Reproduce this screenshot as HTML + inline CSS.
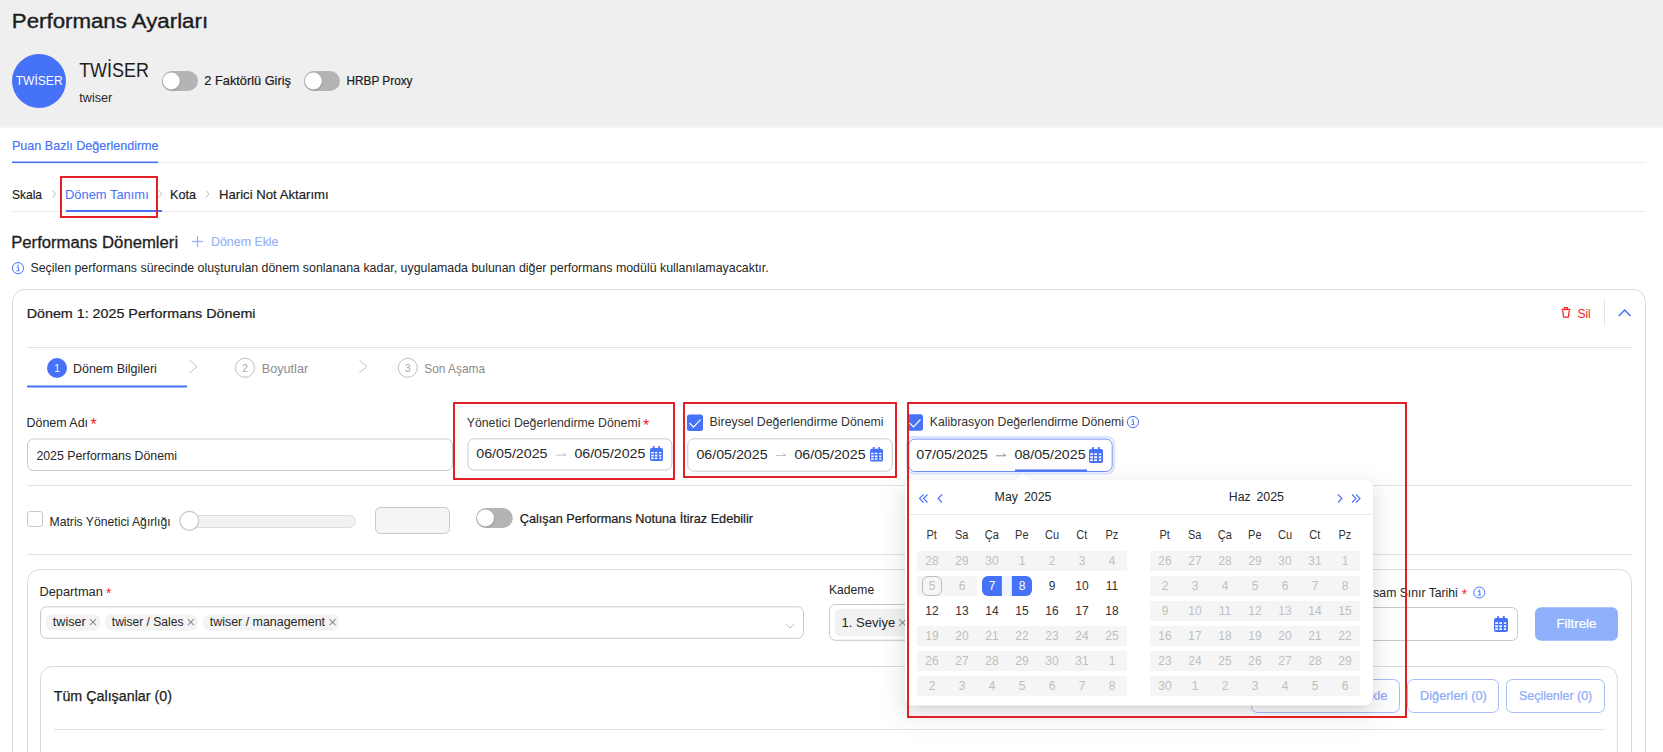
<!DOCTYPE html>
<html><head><meta charset="utf-8"><title>Performans Ayarları</title>
<style>html,body{margin:0;padding:0;background:#fff;overflow:hidden;width:1663px;height:752px;}
svg{position:absolute;left:0;top:0;display:block}
text{font-family:"Liberation Sans", sans-serif;}
</style></head><body>
<svg width="1663" height="752" viewBox="0 0 1663 752" font-family='"Liberation Sans", sans-serif'>
<defs><filter id="blur1" x="-50%" y="-50%" width="200%" height="200%"><feGaussianBlur stdDeviation="1"/></filter><filter id="shadow" x="-10%" y="-10%" width="120%" height="125%"><feGaussianBlur stdDeviation="7"/></filter></defs>
<rect x="0" y="0" width="1663" height="752" rx="0" fill="#ffffff" />
<rect x="0" y="0" width="1663" height="127.6" rx="0" fill="#efefef" />
<text x="11.82" y="28" font-size="20" fill="#1d1d1d" stroke="#1d1d1d" stroke-width="0.36" textLength="196.27" lengthAdjust="spacingAndGlyphs">Performans Ayarları</text>
<circle cx="39" cy="81" r="27" fill="#4672f8"/>
<text x="15.76" y="85" font-size="13" fill="#ffffff" textLength="46.83" lengthAdjust="spacingAndGlyphs">TWİSER</text>
<text x="79.14" y="77" font-size="20" fill="#1d1d1d" textLength="69.73" lengthAdjust="spacingAndGlyphs">TWİSER</text>
<text x="79.31" y="102" font-size="12" fill="#262626" textLength="32.90" lengthAdjust="spacingAndGlyphs">twiser</text>
<rect x="162" y="71" width="36" height="20" rx="10.0" fill="#b4b4b4" />
<circle cx="171.3" cy="81.8" r="8.5" fill="#000" opacity="0.22" filter="url(#blur1)"/>
<circle cx="171.3" cy="81.0" r="8.5" fill="#fff"/>
<text x="204.36" y="85" font-size="13" fill="#1d1d1d" stroke="#1d1d1d" stroke-width="0.23" textLength="86.58" lengthAdjust="spacingAndGlyphs">2 Faktörlü Giriş</text>
<rect x="304" y="71" width="36" height="20" rx="10.0" fill="#b4b4b4" />
<circle cx="313.3" cy="81.8" r="8.5" fill="#000" opacity="0.22" filter="url(#blur1)"/>
<circle cx="313.3" cy="81.0" r="8.5" fill="#fff"/>
<text x="346.56" y="85" font-size="13" fill="#1d1d1d" stroke="#1d1d1d" stroke-width="0.23" textLength="65.94" lengthAdjust="spacingAndGlyphs">HRBP Proxy</text>
<line x1="12" y1="162.5" x2="1646" y2="162.5" stroke="#ececec" stroke-width="1"/>
<text x="12.00" y="150" font-size="13" fill="#4672f8" stroke="#4672f8" stroke-width="0.18" textLength="146.55" lengthAdjust="spacingAndGlyphs">Puan Bazlı Değerlendirme</text>
<rect x="12" y="161.5" width="146" height="1.6" rx="0" fill="#4672f8" />
<line x1="12" y1="211.5" x2="1646" y2="211.5" stroke="#ececec" stroke-width="1"/>
<text x="11.96" y="199" font-size="13" fill="#1d1d1d" stroke="#1d1d1d" stroke-width="0.18" textLength="30.06" lengthAdjust="spacingAndGlyphs">Skala</text>
<polyline points="52.5,190.5 55.5,194.0 52.5,197.5" fill="none" stroke="#bfbfbf" stroke-width="1"/>
<text x="64.97" y="199" font-size="13" fill="#4672f8" textLength="83.75" lengthAdjust="spacingAndGlyphs">Dönem Tanımı</text>
<rect x="66" y="210" width="96" height="2" rx="0" fill="#4672f8" />
<polyline points="159,190.5 162,194.0 159,197.5" fill="none" stroke="#bfbfbf" stroke-width="1"/>
<text x="169.99" y="199" font-size="13" fill="#1d1d1d" stroke="#1d1d1d" stroke-width="0.18" textLength="26.04" lengthAdjust="spacingAndGlyphs">Kota</text>
<polyline points="206,190.5 209,194.0 206,197.5" fill="none" stroke="#bfbfbf" stroke-width="1"/>
<text x="218.95" y="199" font-size="13" fill="#1d1d1d" stroke="#1d1d1d" stroke-width="0.18" textLength="109.81" lengthAdjust="spacingAndGlyphs">Harici Not Aktarımı</text>
<text x="11.16" y="248" font-size="16" fill="#1d1d1d" stroke="#1d1d1d" stroke-width="0.29" textLength="166.98" lengthAdjust="spacingAndGlyphs">Performans Dönemleri</text>
<g stroke="#98b2f9" stroke-width="1.3"><line x1="192" y1="241.5" x2="203" y2="241.5"/><line x1="197.5" y1="236" x2="197.5" y2="247"/></g>
<text x="211.01" y="246" font-size="13" fill="#98b2f9" stroke="#98b2f9" stroke-width="0.18" textLength="67.51" lengthAdjust="spacingAndGlyphs">Dönem Ekle</text>
<circle cx="18" cy="268.2" r="5.6" fill="none" stroke="#4672f8" stroke-width="1"/>
<circle cx="18" cy="265.59999999999997" r="0.75" fill="#4672f8"/>
<path d="M16.7 267.3 H18.55 V270.59999999999997 M16.5 270.8 H19.5" fill="none" stroke="#4672f8" stroke-width="1"/>
<text x="30.44" y="272" font-size="12.8" fill="#262626" textLength="738.21" lengthAdjust="spacingAndGlyphs">Seçilen performans sürecinde oluşturulan dönem sonlanana kadar, uygulamada bulunan diğer performans modülü kullanılamayacaktır.</text>
<rect x="12.5" y="289.5" width="1633" height="600" rx="12" fill="#fff" stroke="#d9d9d9" stroke-width="1" />
<text x="26.66" y="317.8" font-size="12.7" fill="#1d1d1d" stroke="#1d1d1d" stroke-width="0.23" textLength="228.82" lengthAdjust="spacingAndGlyphs">Dönem 1: 2025 Performans Dönemi</text>
<g fill="none" stroke="#f5222d" stroke-width="1.3"><path d="M1561.5 309.5 H1570.5"/><path d="M1564.5 309.2 V307.6 H1567.5 V309.2"/><path d="M1562.7 310.5 L1563.6 317.2 H1568.4 L1569.3 310.5"/></g>
<text x="1577.46" y="317.5" font-size="12" fill="#f5222d" textLength="13.34" lengthAdjust="spacingAndGlyphs">Sil</text>
<line x1="1604.5" y1="299.5" x2="1604.5" y2="325.5" stroke="#e3e3e3" stroke-width="1"/>
<polyline points="1618.8,316 1624.7,310 1630.6,316" fill="none" stroke="#4672f8" stroke-width="1.5"/>
<line x1="27" y1="347.5" x2="1632" y2="347.5" stroke="#e3e3e3" stroke-width="1"/>
<circle cx="57" cy="368" r="10" fill="#4672f8"/>
<text x="57" y="372" font-size="10" fill="#fff" text-anchor="middle">1</text>
<text x="73.00" y="372.5" font-size="13" fill="#262626" textLength="83.81" lengthAdjust="spacingAndGlyphs">Dönem Bilgileri</text>
<polyline points="189.5,360 197.0,366.5 189.5,373" fill="none" stroke="#bfbfbf" stroke-width="1"/>
<rect x="27" y="385.5" width="160" height="2" rx="0" fill="#4672f8" />
<circle cx="245" cy="367.8" r="9.5" fill="none" stroke="#bfbfbf" stroke-width="1"/>
<text x="245" y="371.5" font-size="10" fill="#a6a6a6" text-anchor="middle">2</text>
<text x="261.68" y="372.5" font-size="13" fill="#8c8c8c" textLength="46.55" lengthAdjust="spacingAndGlyphs">Boyutlar</text>
<polyline points="359.3,360 366.8,366.5 359.3,373" fill="none" stroke="#bfbfbf" stroke-width="1"/>
<circle cx="407.8" cy="367.8" r="9.5" fill="none" stroke="#bfbfbf" stroke-width="1"/>
<text x="407.8" y="371.5" font-size="10" fill="#a6a6a6" text-anchor="middle">3</text>
<text x="424.27" y="372.5" font-size="13" fill="#8c8c8c" textLength="60.73" lengthAdjust="spacingAndGlyphs">Son Aşama</text>
<text x="26.50" y="427" font-size="13" fill="#262626" textLength="61.54" lengthAdjust="spacingAndGlyphs">Dönem Adı</text>
<text x="90.41" y="429.76911764705886" font-size="16.91176470588235" fill="#f5222d" textLength="6.22" lengthAdjust="spacingAndGlyphs">*</text>
<rect x="27.5" y="439" width="425" height="31.5" rx="6" fill="#fff" stroke="#c9c9c9" stroke-width="1" />
<text x="36.38" y="459.5" font-size="13" fill="#262626" textLength="140.67" lengthAdjust="spacingAndGlyphs">2025 Performans Dönemi</text>
<text x="466.69" y="427" font-size="13" fill="#333333" textLength="173.75" lengthAdjust="spacingAndGlyphs">Yönetici Değerlendirme Dönemi</text>
<text x="642.96" y="430.77058823529404" font-size="17.05882352941163" fill="#f5222d" textLength="6.27" lengthAdjust="spacingAndGlyphs">*</text>
<rect x="467.9" y="438.8" width="204" height="31.200000000000003" rx="6" fill="#fff" stroke="#c9c9c9" stroke-width="1" />
<text x="476.23" y="457.8" font-size="13" fill="#262626" textLength="71.34" lengthAdjust="spacingAndGlyphs">06/05/2025</text>
<path d="M556.5 455.2 H566 M563 453.2 L566 455.2" fill="none" stroke="#bfbfbf" stroke-width="1"/>
<text x="574.43" y="457.8" font-size="13" fill="#262626" textLength="70.93" lengthAdjust="spacingAndGlyphs">06/05/2025</text>
<g fill="#4672f8">
<rect x="650" y="447.88" width="13" height="13.12" rx="1.86"/>
<rect x="652.88" y="446" width="1.76" height="3.75" rx="0.6"/>
<rect x="658.26" y="446" width="1.76" height="3.75" rx="0.6"/>
</g>
<rect x="651.11" y="451.91" width="2.60" height="1.50" fill="#fff"/>
<rect x="651.11" y="454.72" width="2.60" height="1.78" fill="#fff"/>
<rect x="651.11" y="457.53" width="2.60" height="1.59" fill="#fff"/>
<rect x="654.83" y="451.91" width="2.60" height="1.50" fill="#fff"/>
<rect x="654.83" y="454.72" width="2.60" height="1.78" fill="#fff"/>
<rect x="654.83" y="457.53" width="2.60" height="1.59" fill="#fff"/>
<rect x="659.19" y="451.91" width="2.14" height="1.50" fill="#fff"/>
<rect x="659.19" y="454.72" width="2.14" height="1.78" fill="#fff"/>
<rect x="659.19" y="457.53" width="2.14" height="1.59" fill="#fff"/>
<rect x="687" y="414.5" width="16" height="16.5" rx="2.5" fill="#4672f8" />
<polyline points="689.5,423.0 693.5,427.1 700.5,419.7" fill="none" stroke="#fff" stroke-width="1.15"/>
<text x="709.61" y="426" font-size="13" fill="#333333" textLength="173.91" lengthAdjust="spacingAndGlyphs">Bireysel Değerlendirme Dönemi</text>
<rect x="687.8" y="438.8" width="204.5" height="32.4" rx="6" fill="#fff" stroke="#c9c9c9" stroke-width="1" />
<text x="696.43" y="458.7" font-size="13" fill="#262626" textLength="71.14" lengthAdjust="spacingAndGlyphs">06/05/2025</text>
<path d="M776 455.5 H786 M783 453.5 L786 455.5" fill="none" stroke="#bfbfbf" stroke-width="1"/>
<text x="794.43" y="458.7" font-size="13" fill="#262626" textLength="71.14" lengthAdjust="spacingAndGlyphs">06/05/2025</text>
<g fill="#4672f8">
<rect x="870" y="448.82" width="13" height="12.78" rx="1.86"/>
<rect x="872.88" y="447" width="1.76" height="3.65" rx="0.6"/>
<rect x="878.26" y="447" width="1.76" height="3.65" rx="0.6"/>
</g>
<rect x="871.11" y="452.75" width="2.60" height="1.46" fill="#fff"/>
<rect x="871.11" y="455.49" width="2.60" height="1.73" fill="#fff"/>
<rect x="871.11" y="458.22" width="2.60" height="1.55" fill="#fff"/>
<rect x="874.83" y="452.75" width="2.60" height="1.46" fill="#fff"/>
<rect x="874.83" y="455.49" width="2.60" height="1.73" fill="#fff"/>
<rect x="874.83" y="458.22" width="2.60" height="1.55" fill="#fff"/>
<rect x="879.19" y="452.75" width="2.14" height="1.46" fill="#fff"/>
<rect x="879.19" y="455.49" width="2.14" height="1.73" fill="#fff"/>
<rect x="879.19" y="458.22" width="2.14" height="1.55" fill="#fff"/>
<rect x="907" y="414.3" width="16" height="16.5" rx="2.5" fill="#4672f8" />
<polyline points="909.5,422.8 913.5,426.90000000000003 920.5,419.5" fill="none" stroke="#fff" stroke-width="1.15"/>
<text x="929.82" y="426" font-size="13" fill="#333333" textLength="194.19" lengthAdjust="spacingAndGlyphs">Kalibrasyon Değerlendirme Dönemi</text>
<circle cx="1132.9" cy="422" r="5.6" fill="none" stroke="#4672f8" stroke-width="1"/>
<circle cx="1132.9" cy="419.4" r="0.75" fill="#4672f8"/>
<path d="M1131.6000000000001 421.1 H1133.45 V424.4 M1131.4 424.6 H1134.4" fill="none" stroke="#4672f8" stroke-width="1"/>
<rect x="906.8" y="437.1" width="207.4" height="36.4" rx="7" fill="none" stroke="#dbe5fd" stroke-width="2" />
<rect x="908.8" y="439.1" width="203.4" height="32.4" rx="6" fill="#fff" stroke="#6d8ff7" stroke-width="1" />
<text x="916.23" y="458.9" font-size="13" fill="#262626" textLength="71.54" lengthAdjust="spacingAndGlyphs">07/05/2025</text>
<path d="M996 455.8 H1006 M1003 453.8 L1006 455.8" fill="none" stroke="#8c8c8c" stroke-width="1"/>
<text x="1014.43" y="458.9" font-size="13" fill="#262626" textLength="71.14" lengthAdjust="spacingAndGlyphs">08/05/2025</text>
<g fill="#4672f8">
<rect x="1089" y="449.00" width="14" height="14.00" rx="2.00"/>
<rect x="1092.10" y="447" width="1.90" height="4.00" rx="0.6"/>
<rect x="1097.90" y="447" width="1.90" height="4.00" rx="0.6"/>
</g>
<rect x="1090.20" y="453.30" width="2.80" height="1.60" fill="#fff"/>
<rect x="1090.20" y="456.30" width="2.80" height="1.90" fill="#fff"/>
<rect x="1090.20" y="459.30" width="2.80" height="1.70" fill="#fff"/>
<rect x="1094.20" y="453.30" width="2.80" height="1.60" fill="#fff"/>
<rect x="1094.20" y="456.30" width="2.80" height="1.90" fill="#fff"/>
<rect x="1094.20" y="459.30" width="2.80" height="1.70" fill="#fff"/>
<rect x="1098.90" y="453.30" width="2.30" height="1.60" fill="#fff"/>
<rect x="1098.90" y="456.30" width="2.30" height="1.90" fill="#fff"/>
<rect x="1098.90" y="459.30" width="2.30" height="1.70" fill="#fff"/>
<rect x="1015" y="469.5" width="72" height="2" rx="0" fill="#4672f8" />
<line x1="27" y1="485.5" x2="1632" y2="485.5" stroke="#e3e3e3" stroke-width="1"/>
<rect x="27.5" y="511.5" width="15" height="15" rx="2.5" fill="#fff" stroke="#c9c9c9" stroke-width="1" />
<text x="49.52" y="525.5" font-size="13" fill="#262626" textLength="121.08" lengthAdjust="spacingAndGlyphs">Matris Yönetici Ağırlığı</text>
<rect x="180.5" y="515.5" width="175" height="12" rx="6" fill="#f2f2f2" stroke="#dcdcdc" stroke-width="1" />
<circle cx="189.3" cy="520.8" r="9.5" fill="#fff" stroke="#c9c9c9" stroke-width="1.2"/>
<rect x="375.5" y="507.5" width="74" height="26" rx="5" fill="#f5f5f5" stroke="#c9c9c9" stroke-width="1" />
<rect x="476.2" y="508" width="36.6" height="20" rx="10.0" fill="#b4b4b4" />
<circle cx="485.5" cy="518.8" r="8.5" fill="#000" opacity="0.22" filter="url(#blur1)"/>
<circle cx="485.5" cy="518.0" r="8.5" fill="#fff"/>
<text x="519.77" y="523.3" font-size="13" fill="#1d1d1d" stroke="#1d1d1d" stroke-width="0.23" textLength="233.16" lengthAdjust="spacingAndGlyphs">Çalışan Performans Notuna İtiraz Edebilir</text>
<line x1="27" y1="554.5" x2="1632" y2="554.5" stroke="#e3e3e3" stroke-width="1"/>
<rect x="27.5" y="569.5" width="1604" height="400" rx="12" fill="#fff" stroke="#d9d9d9" stroke-width="1" />
<text x="39.48" y="596" font-size="12.5" fill="#262626" textLength="63.38" lengthAdjust="spacingAndGlyphs">Departman</text>
<text x="106.04" y="598.1470588235294" font-size="14.705882352941176" fill="#f5222d" textLength="5.40" lengthAdjust="spacingAndGlyphs">*</text>
<rect x="40.5" y="606.8" width="763" height="31.5" rx="6" fill="#fff" stroke="#c9c9c9" stroke-width="1" />
<rect x="46" y="614.3" width="54.5" height="16.5" rx="7" fill="#f3f3f3" />
<text x="52.81" y="626" font-size="12" fill="#262626" textLength="32.90" lengthAdjust="spacingAndGlyphs">twiser</text>
<path d="M89.9 619.1 L95.9 625.1 M95.9 619.1 L89.9 625.1" stroke="#8c8c8c" stroke-width="1.05" fill="none"/>
<rect x="105" y="614.3" width="92.5" height="16.5" rx="7" fill="#f3f3f3" />
<text x="111.82" y="626" font-size="12" fill="#262626" textLength="71.62" lengthAdjust="spacingAndGlyphs">twiser / Sales</text>
<path d="M187.8 619.1 L193.8 625.1 M193.8 619.1 L187.8 625.1" stroke="#8c8c8c" stroke-width="1.05" fill="none"/>
<rect x="203" y="614.3" width="136" height="16.5" rx="7" fill="#f3f3f3" />
<text x="209.81" y="626" font-size="12" fill="#262626" textLength="115.27" lengthAdjust="spacingAndGlyphs">twiser / management</text>
<path d="M329.6 619.1 L335.6 625.1 M335.6 619.1 L329.6 625.1" stroke="#8c8c8c" stroke-width="1.05" fill="none"/>
<polyline points="785.4,623.6 790,628 794.5,623.6" fill="none" stroke="#bfbfbf" stroke-width="1"/>
<text x="829.03" y="594.1" font-size="13" fill="#262626" textLength="45.15" lengthAdjust="spacingAndGlyphs">Kademe</text>
<rect x="829.5" y="604.5" width="300" height="35.8" rx="6" fill="#fff" stroke="#c9c9c9" stroke-width="1" />
<rect x="834.8" y="609" width="200" height="27" rx="5" fill="#f2f2f2" />
<text x="841.62" y="626.8" font-size="13" fill="#262626" textLength="53.54" lengthAdjust="spacingAndGlyphs">1. Seviye</text>
<path d="M899.2 619.3000000000001 L905.8 625.9 M905.8 619.3000000000001 L899.2 625.9" stroke="#8c8c8c" stroke-width="1.05" fill="none"/>
<text x="1351.52" y="597" font-size="13" fill="#262626" textLength="106.30" lengthAdjust="spacingAndGlyphs">Kapsam Sınır Tarihi</text>
<text x="1461.79" y="598.6470588235294" font-size="14.705882352941176" fill="#f5222d" textLength="5.40" lengthAdjust="spacingAndGlyphs">*</text>
<circle cx="1479.3" cy="592.5" r="5.5" fill="none" stroke="#4672f8" stroke-width="1"/>
<circle cx="1479.3" cy="589.9" r="0.75" fill="#4672f8"/>
<path d="M1478.0 591.6 H1479.85 V594.9 M1477.8 595.1 H1480.8" fill="none" stroke="#4672f8" stroke-width="1"/>
<rect x="1300.5" y="607.5" width="217" height="33" rx="6" fill="#fff" stroke="#c9c9c9" stroke-width="1" />
<g fill="#4672f8">
<rect x="1494" y="618.00" width="14" height="14.00" rx="2.00"/>
<rect x="1497.10" y="616" width="1.90" height="4.00" rx="0.6"/>
<rect x="1502.90" y="616" width="1.90" height="4.00" rx="0.6"/>
</g>
<rect x="1495.20" y="622.30" width="2.80" height="1.60" fill="#fff"/>
<rect x="1495.20" y="625.30" width="2.80" height="1.90" fill="#fff"/>
<rect x="1495.20" y="628.30" width="2.80" height="1.70" fill="#fff"/>
<rect x="1499.20" y="622.30" width="2.80" height="1.60" fill="#fff"/>
<rect x="1499.20" y="625.30" width="2.80" height="1.90" fill="#fff"/>
<rect x="1499.20" y="628.30" width="2.80" height="1.70" fill="#fff"/>
<rect x="1503.90" y="622.30" width="2.30" height="1.60" fill="#fff"/>
<rect x="1503.90" y="625.30" width="2.30" height="1.90" fill="#fff"/>
<rect x="1503.90" y="628.30" width="2.30" height="1.70" fill="#fff"/>
<rect x="1535" y="607.2" width="83" height="33.5" rx="6" fill="#8fb1fb" />
<text x="1556.43" y="627.9" font-size="13" fill="#ffffff" stroke="#ffffff" stroke-width="0.23" textLength="40.11" lengthAdjust="spacingAndGlyphs">Filtrele</text>
<rect x="40.5" y="666.5" width="1576.8" height="300" rx="12" fill="#fff" stroke="#d9d9d9" stroke-width="1" />
<text x="53.71" y="701" font-size="14" fill="#1d1d1d" stroke="#1d1d1d" stroke-width="0.25" textLength="118.21" lengthAdjust="spacingAndGlyphs">Tüm Çalışanlar (0)</text>
<rect x="1251.5" y="679.5" width="148" height="33" rx="6" fill="#fff" stroke="#a6bdfa" stroke-width="1" />
<text x="1309.74" y="700" font-size="13" fill="#8eaaf8" stroke="#8eaaf8" stroke-width="0.23" textLength="77.82" lengthAdjust="spacingAndGlyphs">Tümünü Ekle</text>
<rect x="1407.5" y="679.5" width="91" height="33" rx="6" fill="#fff" stroke="#a6bdfa" stroke-width="1" />
<text x="1419.98" y="700" font-size="13" fill="#8eaaf8" stroke="#8eaaf8" stroke-width="0.23" textLength="66.84" lengthAdjust="spacingAndGlyphs">Diğerleri (0)</text>
<rect x="1506.5" y="679.5" width="98" height="33" rx="6" fill="#fff" stroke="#a6bdfa" stroke-width="1" />
<text x="1518.94" y="700" font-size="13" fill="#8eaaf8" stroke="#8eaaf8" stroke-width="0.23" textLength="73.32" lengthAdjust="spacingAndGlyphs">Seçilenler (0)</text>
<line x1="54" y1="729.5" x2="1604.8" y2="729.5" stroke="#e3e3e3" stroke-width="1"/>
<filter id="sh1" filterUnits="userSpaceOnUse" x="825" y="400" width="628" height="385.5"><feGaussianBlur stdDeviation="8.0"/></filter>
<rect x="905" y="486" width="468" height="225.5" rx="8" fill="#000" opacity="0.08" filter="url(#sh1)"/>
<filter id="sh2" filterUnits="userSpaceOnUse" x="825" y="400" width="628" height="385.5"><feGaussianBlur stdDeviation="3.0"/></filter>
<rect x="909" y="487" width="460" height="217.5" rx="8" fill="#000" opacity="0.12" filter="url(#sh2)"/>
<filter id="sh3" filterUnits="userSpaceOnUse" x="825" y="400" width="628" height="385.5"><feGaussianBlur stdDeviation="14.0"/></filter>
<rect x="897" y="481" width="484" height="241.5" rx="16" fill="#000" opacity="0.05" filter="url(#sh3)"/>
<rect x="905" y="480" width="468" height="225.5" rx="8" fill="#fff" />
<path d="M1016 480 L1023 473.5 L1030 480 Z" fill="#fff"/>
<g fill="none" stroke="#4672f8" stroke-width="1.1"><polyline points="923.5,494.5 919.5,498.5 923.5,502.5"/><polyline points="927.5,494.5 923.5,498.5 927.5,502.5"/><polyline points="942,494.5 938,498.5 942,502.5"/><polyline points="1338,494.5 1342,498.5 1338,502.5"/><polyline points="1352,494.5 1356,498.5 1352,502.5"/><polyline points="1356,494.5 1360,498.5 1356,502.5"/></g>
<text x="994.61" y="501" font-size="12.3" fill="#262626" textLength="23.38" lengthAdjust="spacingAndGlyphs">May</text>
<text x="1023.88" y="501" font-size="12.3" fill="#262626" textLength="27.61" lengthAdjust="spacingAndGlyphs">2025</text>
<text x="1228.82" y="501" font-size="12.3" fill="#262626" textLength="21.77" lengthAdjust="spacingAndGlyphs">Haz</text>
<text x="1256.38" y="501" font-size="12.3" fill="#262626" textLength="27.61" lengthAdjust="spacingAndGlyphs">2025</text>
<line x1="909" y1="514.5" x2="1373" y2="514.5" stroke="#ebebeb" stroke-width="1"/>
<text x="926.42" y="539" font-size="12.5" fill="#333333" textLength="10.39" lengthAdjust="spacingAndGlyphs">Pt</text>
<text x="955.04" y="539" font-size="12.5" fill="#333333" textLength="13.46" lengthAdjust="spacingAndGlyphs">Sa</text>
<text x="984.71" y="539" font-size="12.5" fill="#333333" textLength="14.06" lengthAdjust="spacingAndGlyphs">Ça</text>
<text x="1015.07" y="539" font-size="12.5" fill="#333333" textLength="13.46" lengthAdjust="spacingAndGlyphs">Pe</text>
<text x="1045.07" y="539" font-size="12.5" fill="#333333" textLength="14.06" lengthAdjust="spacingAndGlyphs">Cu</text>
<text x="1076.28" y="539" font-size="12.5" fill="#333333" textLength="11.00" lengthAdjust="spacingAndGlyphs">Ct</text>
<text x="1105.43" y="539" font-size="12.5" fill="#333333" textLength="12.84" lengthAdjust="spacingAndGlyphs">Pz</text>
<rect x="917" y="551" width="210" height="20" rx="0" fill="#f5f5f5" />
<rect x="917" y="576" width="60" height="20" rx="0" fill="#f5f5f5" />
<rect x="917" y="626" width="210" height="20" rx="0" fill="#f5f5f5" />
<rect x="917" y="651" width="210" height="20" rx="0" fill="#f5f5f5" />
<rect x="917" y="676" width="210" height="20" rx="0" fill="#f5f5f5" />
<rect x="1001.7" y="576" width="10.5" height="20" rx="0" fill="#eef3fe" />
<path d="M988 576 H1001.9 V596 H988 A6 6 0 0 1 982 590 V582 A6 6 0 0 1 988 576 Z" fill="#4672f8"/>
<path d="M1011.9 576 H1026 A6 6 0 0 1 1032 582 V590 A6 6 0 0 1 1026 596 H1011.9 Z" fill="#4672f8"/>
<rect x="922.5" y="576.5" width="19" height="19" rx="5.5" fill="none" stroke="#bdbdbd" stroke-width="1" />
<text x="932" y="565.2" font-size="12" fill="#bfbfbf" text-anchor="middle">28</text>
<text x="962" y="565.2" font-size="12" fill="#bfbfbf" text-anchor="middle">29</text>
<text x="992" y="565.2" font-size="12" fill="#bfbfbf" text-anchor="middle">30</text>
<text x="1022" y="565.2" font-size="12" fill="#bfbfbf" text-anchor="middle">1</text>
<text x="1052" y="565.2" font-size="12" fill="#bfbfbf" text-anchor="middle">2</text>
<text x="1082" y="565.2" font-size="12" fill="#bfbfbf" text-anchor="middle">3</text>
<text x="1112" y="565.2" font-size="12" fill="#bfbfbf" text-anchor="middle">4</text>
<text x="932" y="590.2" font-size="12" fill="#bfbfbf" text-anchor="middle">5</text>
<text x="962" y="590.2" font-size="12" fill="#bfbfbf" text-anchor="middle">6</text>
<text x="992" y="590.2" font-size="12" fill="#ffffff" text-anchor="middle">7</text>
<text x="1022" y="590.2" font-size="12" fill="#ffffff" text-anchor="middle">8</text>
<text x="1052" y="590.2" font-size="12" fill="#333333" text-anchor="middle">9</text>
<text x="1082" y="590.2" font-size="12" fill="#333333" text-anchor="middle">10</text>
<text x="1112" y="590.2" font-size="12" fill="#333333" text-anchor="middle">11</text>
<text x="932" y="615.2" font-size="12" fill="#333333" text-anchor="middle">12</text>
<text x="962" y="615.2" font-size="12" fill="#333333" text-anchor="middle">13</text>
<text x="992" y="615.2" font-size="12" fill="#333333" text-anchor="middle">14</text>
<text x="1022" y="615.2" font-size="12" fill="#333333" text-anchor="middle">15</text>
<text x="1052" y="615.2" font-size="12" fill="#333333" text-anchor="middle">16</text>
<text x="1082" y="615.2" font-size="12" fill="#333333" text-anchor="middle">17</text>
<text x="1112" y="615.2" font-size="12" fill="#333333" text-anchor="middle">18</text>
<text x="932" y="640.2" font-size="12" fill="#bfbfbf" text-anchor="middle">19</text>
<text x="962" y="640.2" font-size="12" fill="#bfbfbf" text-anchor="middle">20</text>
<text x="992" y="640.2" font-size="12" fill="#bfbfbf" text-anchor="middle">21</text>
<text x="1022" y="640.2" font-size="12" fill="#bfbfbf" text-anchor="middle">22</text>
<text x="1052" y="640.2" font-size="12" fill="#bfbfbf" text-anchor="middle">23</text>
<text x="1082" y="640.2" font-size="12" fill="#bfbfbf" text-anchor="middle">24</text>
<text x="1112" y="640.2" font-size="12" fill="#bfbfbf" text-anchor="middle">25</text>
<text x="932" y="665.2" font-size="12" fill="#bfbfbf" text-anchor="middle">26</text>
<text x="962" y="665.2" font-size="12" fill="#bfbfbf" text-anchor="middle">27</text>
<text x="992" y="665.2" font-size="12" fill="#bfbfbf" text-anchor="middle">28</text>
<text x="1022" y="665.2" font-size="12" fill="#bfbfbf" text-anchor="middle">29</text>
<text x="1052" y="665.2" font-size="12" fill="#bfbfbf" text-anchor="middle">30</text>
<text x="1082" y="665.2" font-size="12" fill="#bfbfbf" text-anchor="middle">31</text>
<text x="1112" y="665.2" font-size="12" fill="#bfbfbf" text-anchor="middle">1</text>
<text x="932" y="690.2" font-size="12" fill="#bfbfbf" text-anchor="middle">2</text>
<text x="962" y="690.2" font-size="12" fill="#bfbfbf" text-anchor="middle">3</text>
<text x="992" y="690.2" font-size="12" fill="#bfbfbf" text-anchor="middle">4</text>
<text x="1022" y="690.2" font-size="12" fill="#bfbfbf" text-anchor="middle">5</text>
<text x="1052" y="690.2" font-size="12" fill="#bfbfbf" text-anchor="middle">6</text>
<text x="1082" y="690.2" font-size="12" fill="#bfbfbf" text-anchor="middle">7</text>
<text x="1112" y="690.2" font-size="12" fill="#bfbfbf" text-anchor="middle">8</text>
<text x="1159.42" y="539" font-size="12.5" fill="#333333" textLength="10.39" lengthAdjust="spacingAndGlyphs">Pt</text>
<text x="1188.04" y="539" font-size="12.5" fill="#333333" textLength="13.46" lengthAdjust="spacingAndGlyphs">Sa</text>
<text x="1217.71" y="539" font-size="12.5" fill="#333333" textLength="14.06" lengthAdjust="spacingAndGlyphs">Ça</text>
<text x="1248.07" y="539" font-size="12.5" fill="#333333" textLength="13.46" lengthAdjust="spacingAndGlyphs">Pe</text>
<text x="1278.07" y="539" font-size="12.5" fill="#333333" textLength="14.06" lengthAdjust="spacingAndGlyphs">Cu</text>
<text x="1309.28" y="539" font-size="12.5" fill="#333333" textLength="11.00" lengthAdjust="spacingAndGlyphs">Ct</text>
<text x="1338.43" y="539" font-size="12.5" fill="#333333" textLength="12.84" lengthAdjust="spacingAndGlyphs">Pz</text>
<rect x="1150" y="551" width="210" height="20" rx="0" fill="#f5f5f5" />
<text x="1165" y="565.2" font-size="12" fill="#bfbfbf" text-anchor="middle">26</text>
<text x="1195" y="565.2" font-size="12" fill="#bfbfbf" text-anchor="middle">27</text>
<text x="1225" y="565.2" font-size="12" fill="#bfbfbf" text-anchor="middle">28</text>
<text x="1255" y="565.2" font-size="12" fill="#bfbfbf" text-anchor="middle">29</text>
<text x="1285" y="565.2" font-size="12" fill="#bfbfbf" text-anchor="middle">30</text>
<text x="1315" y="565.2" font-size="12" fill="#bfbfbf" text-anchor="middle">31</text>
<text x="1345" y="565.2" font-size="12" fill="#bfbfbf" text-anchor="middle">1</text>
<rect x="1150" y="576" width="210" height="20" rx="0" fill="#f5f5f5" />
<text x="1165" y="590.2" font-size="12" fill="#bfbfbf" text-anchor="middle">2</text>
<text x="1195" y="590.2" font-size="12" fill="#bfbfbf" text-anchor="middle">3</text>
<text x="1225" y="590.2" font-size="12" fill="#bfbfbf" text-anchor="middle">4</text>
<text x="1255" y="590.2" font-size="12" fill="#bfbfbf" text-anchor="middle">5</text>
<text x="1285" y="590.2" font-size="12" fill="#bfbfbf" text-anchor="middle">6</text>
<text x="1315" y="590.2" font-size="12" fill="#bfbfbf" text-anchor="middle">7</text>
<text x="1345" y="590.2" font-size="12" fill="#bfbfbf" text-anchor="middle">8</text>
<rect x="1150" y="601" width="210" height="20" rx="0" fill="#f5f5f5" />
<text x="1165" y="615.2" font-size="12" fill="#bfbfbf" text-anchor="middle">9</text>
<text x="1195" y="615.2" font-size="12" fill="#bfbfbf" text-anchor="middle">10</text>
<text x="1225" y="615.2" font-size="12" fill="#bfbfbf" text-anchor="middle">11</text>
<text x="1255" y="615.2" font-size="12" fill="#bfbfbf" text-anchor="middle">12</text>
<text x="1285" y="615.2" font-size="12" fill="#bfbfbf" text-anchor="middle">13</text>
<text x="1315" y="615.2" font-size="12" fill="#bfbfbf" text-anchor="middle">14</text>
<text x="1345" y="615.2" font-size="12" fill="#bfbfbf" text-anchor="middle">15</text>
<rect x="1150" y="626" width="210" height="20" rx="0" fill="#f5f5f5" />
<text x="1165" y="640.2" font-size="12" fill="#bfbfbf" text-anchor="middle">16</text>
<text x="1195" y="640.2" font-size="12" fill="#bfbfbf" text-anchor="middle">17</text>
<text x="1225" y="640.2" font-size="12" fill="#bfbfbf" text-anchor="middle">18</text>
<text x="1255" y="640.2" font-size="12" fill="#bfbfbf" text-anchor="middle">19</text>
<text x="1285" y="640.2" font-size="12" fill="#bfbfbf" text-anchor="middle">20</text>
<text x="1315" y="640.2" font-size="12" fill="#bfbfbf" text-anchor="middle">21</text>
<text x="1345" y="640.2" font-size="12" fill="#bfbfbf" text-anchor="middle">22</text>
<rect x="1150" y="651" width="210" height="20" rx="0" fill="#f5f5f5" />
<text x="1165" y="665.2" font-size="12" fill="#bfbfbf" text-anchor="middle">23</text>
<text x="1195" y="665.2" font-size="12" fill="#bfbfbf" text-anchor="middle">24</text>
<text x="1225" y="665.2" font-size="12" fill="#bfbfbf" text-anchor="middle">25</text>
<text x="1255" y="665.2" font-size="12" fill="#bfbfbf" text-anchor="middle">26</text>
<text x="1285" y="665.2" font-size="12" fill="#bfbfbf" text-anchor="middle">27</text>
<text x="1315" y="665.2" font-size="12" fill="#bfbfbf" text-anchor="middle">28</text>
<text x="1345" y="665.2" font-size="12" fill="#bfbfbf" text-anchor="middle">29</text>
<rect x="1150" y="676" width="210" height="20" rx="0" fill="#f5f5f5" />
<text x="1165" y="690.2" font-size="12" fill="#bfbfbf" text-anchor="middle">30</text>
<text x="1195" y="690.2" font-size="12" fill="#bfbfbf" text-anchor="middle">1</text>
<text x="1225" y="690.2" font-size="12" fill="#bfbfbf" text-anchor="middle">2</text>
<text x="1255" y="690.2" font-size="12" fill="#bfbfbf" text-anchor="middle">3</text>
<text x="1285" y="690.2" font-size="12" fill="#bfbfbf" text-anchor="middle">4</text>
<text x="1315" y="690.2" font-size="12" fill="#bfbfbf" text-anchor="middle">5</text>
<text x="1345" y="690.2" font-size="12" fill="#bfbfbf" text-anchor="middle">6</text>
</svg>
<div style="position:absolute;left:59.5px;top:175.7px;width:98.30000000000001px;height:41.900000000000006px;box-sizing:border-box;border:2.4px solid #e42027;"></div>
<div style="position:absolute;left:452.8px;top:402.2px;width:221.8px;height:78.0px;box-sizing:border-box;border:2.6px solid #e42027;"></div>
<div style="position:absolute;left:682.8px;top:401.8px;width:214.60000000000002px;height:76.0px;box-sizing:border-box;border:2.6px solid #e42027;"></div>
<div style="position:absolute;left:906.6px;top:402.2px;width:499.9999999999999px;height:316.00000000000006px;box-sizing:border-box;border:2.6px solid #e42027;"></div>
</body></html>
